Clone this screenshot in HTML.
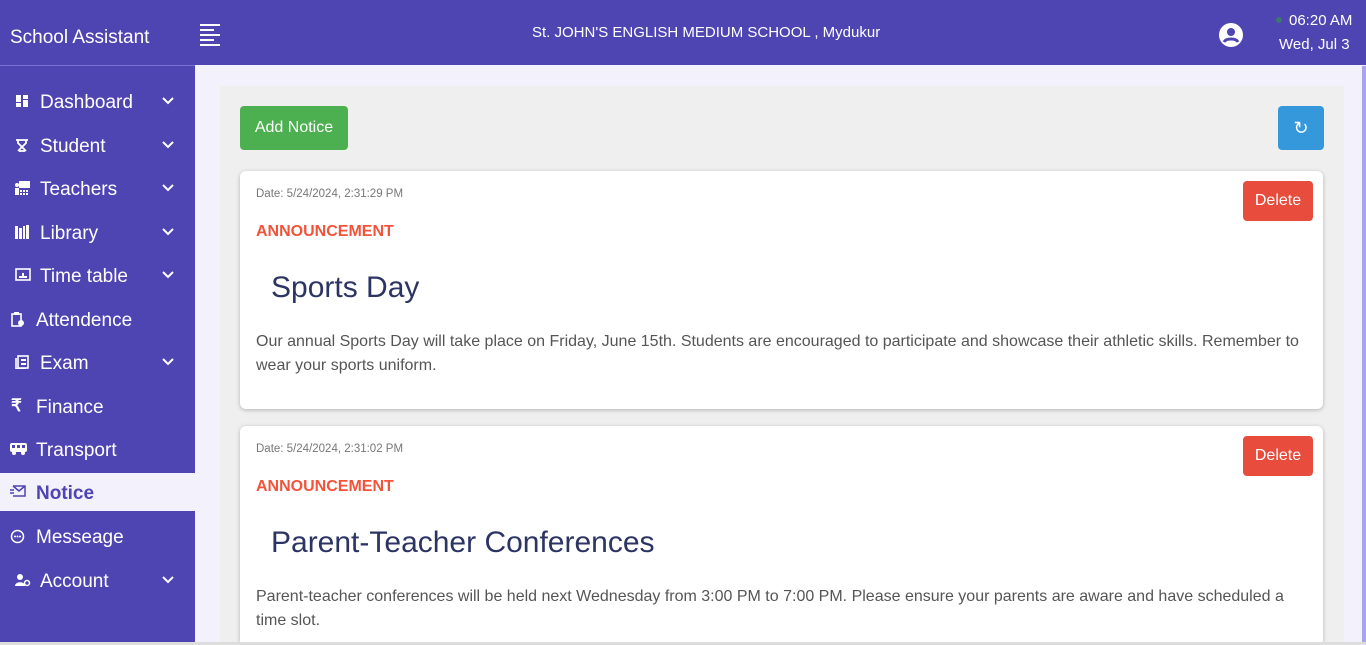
<!DOCTYPE html>
<html><head><style>
*{box-sizing:border-box;margin:0;padding:0}
html,body{width:1366px;height:645px;overflow:hidden}
body{font-family:"Liberation Sans",sans-serif;background:#f3f2fc;position:relative}
.top{position:absolute;left:0;top:0;width:1366px;height:65px;background:#4e44b2;color:#fff}
.brand{position:absolute;left:10px;top:27px;font-size:19px}
.hline{position:absolute;left:0;top:65px;width:195px;height:1px;background:#7a73d6}
.side{position:absolute;left:0;top:66px;width:195px;height:579px;background:#4e44b2;color:#fff}
.item{position:absolute;left:0;width:195px;height:38px;font-size:19px;line-height:38px}
.item svg.ic{position:absolute;left:15px;top:12px}
.item .t{position:absolute;left:40px;top:2px}
.item svg.chev{position:absolute;left:162px;top:15px}
.active{background:#f3f2fc;color:#4e44b2;font-weight:bold}
.panel{position:absolute;left:220px;top:86px;width:1124px;height:556px;background:#efefef}
.card{position:absolute;left:240px;width:1083px;background:#fff;border-radius:6px;box-shadow:0 1px 4px rgba(0,0,0,.25)}
.date{position:absolute;left:16px;top:17px;font-size:11.5px;color:#777}
.ann{position:absolute;left:16px;top:52px;font-size:16px;font-weight:bold;color:#f2533a}
.ttl{position:absolute;left:31px;top:100px;font-size:30px;color:#2c3464}
.body{position:absolute;left:16px;top:159px;width:1055px;font-size:16px;line-height:24px;color:#555}
.del{position:absolute;right:10px;top:10px;width:70px;height:40px;background:#e74c3c;color:#fff;border-radius:4px;font-size:16px;line-height:40px;text-align:center}
</style></head><body>
<div class="top">
<div class="brand">School Assistant</div>
<svg style="position:absolute;left:200px;top:24px" width="21" height="22"><g fill="#fff"><rect x="0" y="0" width="20" height="2"/><rect x="0" y="5" width="14" height="2"/><rect x="0" y="10" width="20" height="2"/><rect x="0" y="15" width="14" height="2"/><rect x="0" y="20" width="20" height="2"/></g></svg>
<div style="position:absolute;left:532px;top:24px;font-size:15px">St. JOHN'S ENGLISH MEDIUM SCHOOL , Mydukur</div>
<svg style="position:absolute;left:1219px;top:23px" width="24" height="24" viewBox="0 0 24 24"><circle cx="12" cy="12" r="12" fill="#fff"/><circle cx="12" cy="9" r="4" fill="#4e44b2"/><path d="M5 19c2-4 12-4 14 0" stroke="#4e44b2" stroke-width="3" fill="none"/></svg>
<div style="position:absolute;left:1276px;top:17px;width:6px;height:6px;border-radius:3px;background:#3a7a6a"></div>
<div style="position:absolute;left:1289px;top:12px;font-size:15px">06:20 AM</div>
<div style="position:absolute;left:1279px;top:36px;font-size:15px">Wed, Jul 3</div>
</div>
<div class="hline"></div>
<div class="side">
<div class="item" style="top:16px"><svg class="ic" width="14" height="14"><g fill="#fff"><rect x="1" y="1" width="5" height="7"/><rect x="8" y="1" width="5" height="4"/><rect x="1" y="9" width="5" height="4"/><rect x="8" y="6" width="5" height="7"/></g></svg><span class="t">Dashboard</span><svg class="chev" width="12" height="8"><path d="M1 1l5 5 5-5" stroke="#fff" stroke-width="2" fill="none"/></svg></div>
<div class="item" style="top:60px"><svg class="ic" width="14" height="14"><path d="M1 2h12M3 2v3l8 8M11 2v3L3 13M4 13h6" stroke="#fff" stroke-width="1.8" fill="none"/></svg><span class="t">Student</span><svg class="chev" width="12" height="8"><path d="M1 1l5 5 5-5" stroke="#fff" stroke-width="2" fill="none"/></svg></div>
<div class="item" style="top:103px"><svg class="ic" width="16" height="14"><g fill="#fff"><rect x="4" y="0" width="11" height="7"/><circle cx="2" cy="4" r="2"/><rect x="0" y="7" width="4" height="7"/><rect x="5" y="9" width="2" height="2"/><rect x="8" y="9" width="2" height="2"/><rect x="11" y="9" width="2" height="2"/><rect x="5" y="12" width="2" height="2"/><rect x="8" y="12" width="2" height="2"/><rect x="11" y="12" width="2" height="2"/></g></svg><span class="t">Teachers</span><svg class="chev" width="12" height="8"><path d="M1 1l5 5 5-5" stroke="#fff" stroke-width="2" fill="none"/></svg></div>
<div class="item" style="top:147px"><svg class="ic" width="15" height="14"><g fill="#fff"><rect x="0" y="1" width="3" height="13"/><rect x="4" y="3" width="3" height="11"/><rect x="8" y="1" width="2" height="13"/><rect x="11" y="0" width="3" height="14"/></g></svg><span class="t">Library</span><svg class="chev" width="12" height="8"><path d="M1 1l5 5 5-5" stroke="#fff" stroke-width="2" fill="none"/></svg></div>
<div class="item" style="top:190px"><svg class="ic" width="16" height="14"><rect x="1" y="1" width="14" height="11" stroke="#fff" stroke-width="1.6" fill="none"/><rect x="4" y="8" width="8" height="2" fill="#fff"/><rect x="7" y="5" width="2" height="3" fill="#fff"/></svg><span class="t">Time table</span><svg class="chev" width="12" height="8"><path d="M1 1l5 5 5-5" stroke="#fff" stroke-width="2" fill="none"/></svg></div>
<div class="item" style="top:234px"><svg class="ic" style="left:11px" width="14" height="15"><rect x="1" y="2" width="9" height="12" stroke="#fff" stroke-width="1.6" fill="none"/><rect x="3" y="0" width="5" height="3" fill="#fff"/><circle cx="10" cy="11" r="3" fill="#fff"/></svg><span class="t" style="left:36px">Attendence</span></div>
<div class="item" style="top:277px"><svg class="ic" width="14" height="14"><rect x="3" y="1" width="10" height="12" stroke="#fff" stroke-width="1.6" fill="none"/><path d="M1 3v11h10" stroke="#fff" stroke-width="1.6" fill="none"/><rect x="6" y="4" width="5" height="2" fill="#fff"/><rect x="6" y="8" width="5" height="2" fill="#fff"/></svg><span class="t">Exam</span><svg class="chev" width="12" height="8"><path d="M1 1l5 5 5-5" stroke="#fff" stroke-width="2" fill="none"/></svg></div>
<div class="item" style="top:321px"><span style="position:absolute;left:11px;top:0px;font-size:17px;font-weight:bold">₹</span><span class="t" style="left:36px">Finance</span></div>
<div class="item" style="top:364px"><svg class="ic" style="left:10px" width="17" height="13"><rect x="0" y="1" width="17" height="9" rx="2" fill="#fff"/><rect x="2" y="3" width="3" height="3" fill="#4e44b2"/><rect x="7" y="3" width="3" height="3" fill="#4e44b2"/><rect x="12" y="3" width="3" height="3" fill="#4e44b2"/><circle cx="4" cy="11" r="2" fill="#fff"/><circle cx="13" cy="11" r="2" fill="#fff"/></svg><span class="t" style="left:36px">Transport</span></div>
<div class="item active" style="top:407px"><svg class="ic" style="left:10px" width="16" height="13"><path d="M3 1h12v10H3M3 1l6 5 6-5M0 5h4M0 8h4" stroke="#4e44b2" stroke-width="1.5" fill="none"/></svg><span class="t" style="left:36px">Notice</span></div>
<div class="item" style="top:451px"><svg class="ic" style="left:10px" width="15" height="15"><circle cx="7.5" cy="7.5" r="6" stroke="#fff" stroke-width="1.5" fill="none"/><circle cx="5" cy="7.5" r="1" fill="#fff"/><circle cx="7.5" cy="7.5" r="1" fill="#fff"/><circle cx="10" cy="7.5" r="1" fill="#fff"/></svg><span class="t" style="left:36px">Messeage</span></div>
<div class="item" style="top:495px"><svg class="ic" width="16" height="14"><circle cx="5" cy="4" r="3" fill="#fff"/><path d="M0 13c0-5 10-5 10 0z" fill="#fff"/><circle cx="12" cy="10" r="2.5" stroke="#fff" stroke-width="1.5" fill="none"/></svg><span class="t">Account</span><svg class="chev" width="12" height="8"><path d="M1 1l5 5 5-5" stroke="#fff" stroke-width="2" fill="none"/></svg></div>
</div>
<div style="position:absolute;left:1362px;top:66px;width:4px;height:579px;background:#a9a4ec"></div>
<div class="panel"></div>
<div style="position:absolute;left:240px;top:106px;width:108px;height:44px;background:#4caf50;color:#fff;border-radius:4px;font-size:16px;line-height:44px;text-align:center">Add Notice</div>
<div style="position:absolute;left:1278px;top:106px;width:46px;height:44px;background:#3498db;color:#fff;border-radius:4px;font-size:18px;line-height:44px;text-align:center">↻</div>
<div class="card" style="top:171px;height:238px">
<div class="date">Date: 5/24/2024, 2:31:29 PM</div><div class="del">Delete</div>
<div class="ann">ANNOUNCEMENT</div><div class="ttl">Sports Day</div>
<div class="body">Our annual Sports Day will take place on Friday, June 15th. Students are encouraged to participate and showcase their athletic skills. Remember to wear your sports uniform.</div>
</div>
<div class="card" style="top:426px;height:216px;border-radius:6px 6px 0 0">
<div class="date">Date: 5/24/2024, 2:31:02 PM</div><div class="del">Delete</div>
<div class="ann">ANNOUNCEMENT</div><div class="ttl">Parent-Teacher Conferences</div>
<div class="body">Parent-teacher conferences will be held next Wednesday from 3:00 PM to 7:00 PM. Please ensure your parents are aware and have scheduled a time slot.</div>
</div>
<div style="position:absolute;left:0;top:642px;width:1366px;height:3px;background:#ddd"></div>
</body></html>
